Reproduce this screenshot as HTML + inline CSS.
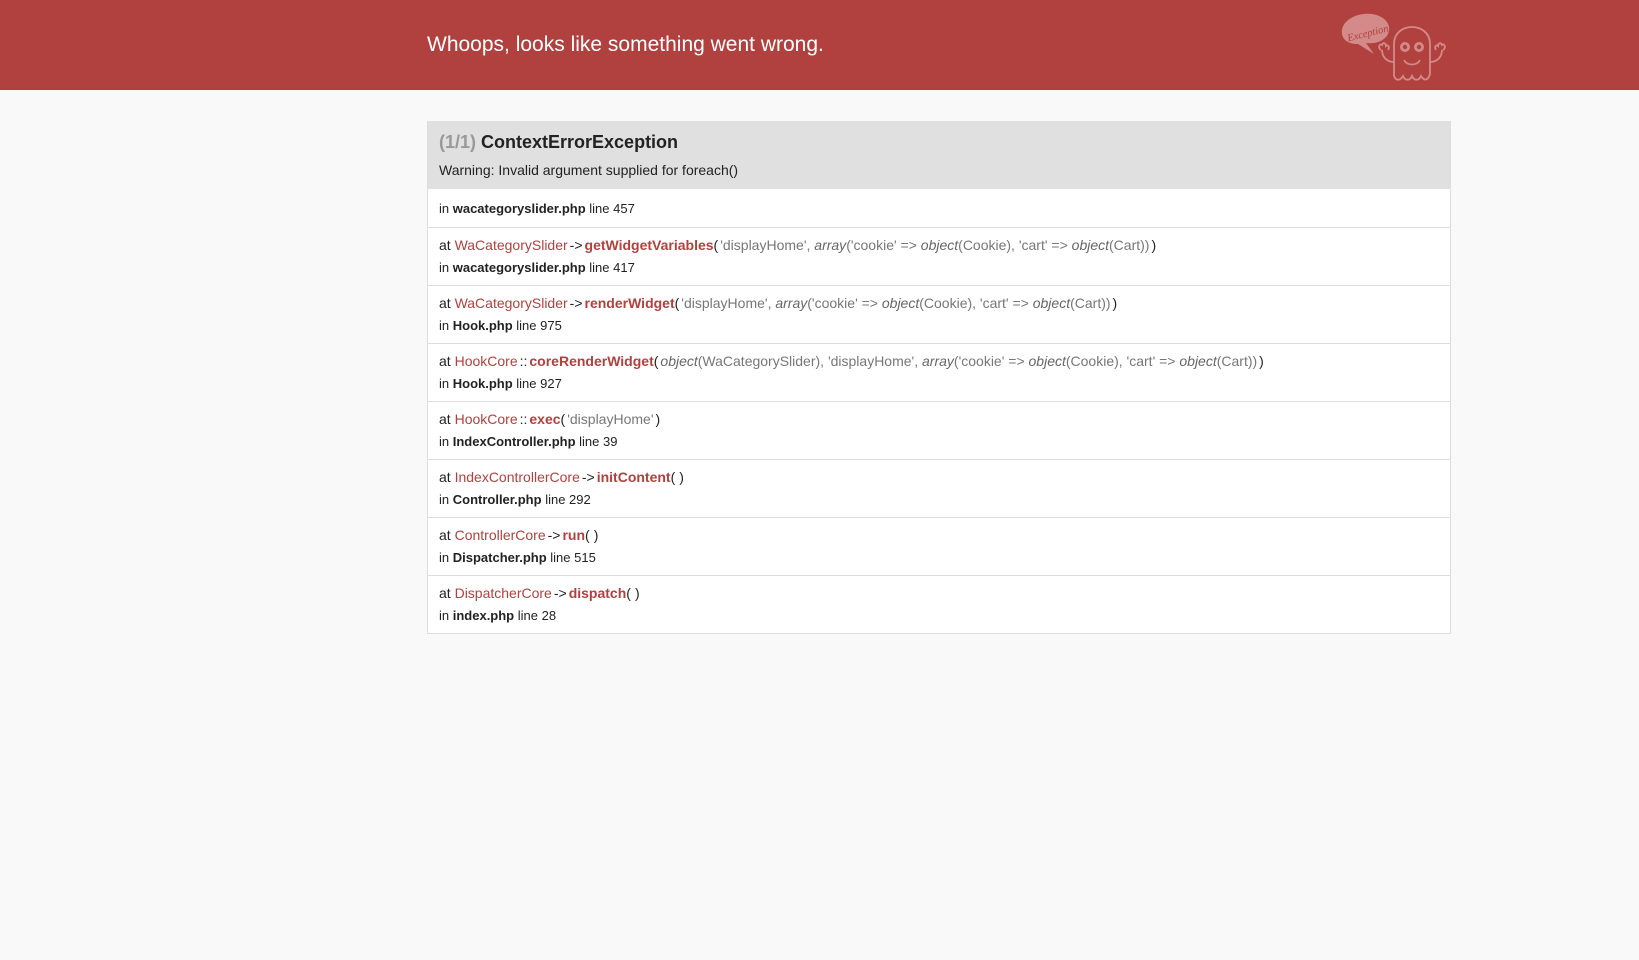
<!DOCTYPE html>
<html><head><meta charset="utf-8"><style>
*{margin:0;padding:0;box-sizing:border-box}
body{background:#f9f9f9;font-family:"Liberation Sans",Arial,sans-serif;color:#222;width:1639px;height:960px;overflow:hidden}
.hdr{background:#b0413e;height:90px;position:relative}
.hdr h1{position:absolute;left:427px;top:31px;font-size:21px;font-weight:normal;color:#fff;line-height:28px}
.box{position:absolute;left:427px;top:121px;width:1024px;border:1px solid #ddd;border-top:none;background:#fff}
.head{background:#e0e0e0;padding:9px 11px 8px}
.head h2{font-size:18px;line-height:24px;font-weight:bold;color:#222}
.head h2 span{color:#999}
.head p{font-size:14px;line-height:22px;margin-top:5px}
.row{border-top:1px solid #ddd;padding:6px 11px 8px;font-size:14px;line-height:22px;height:58px}
.row.f{padding:9px 11px 7px;height:38px;border-top:none;font-size:13px}
.in{font-size:13px}
.in b{color:#222}
.c{color:#b0413e}
.m{color:#b0413e;font-weight:bold}
.a{color:#777;margin:0 2px}
.a i{color:#666}
.s{margin:0 2px}
</style></head><body>
<div class="hdr"><h1>Whoops, looks like something went wrong.</h1>
<svg style="position:absolute;left:1338px;top:10px" width="116" height="72" viewBox="0 0 116 72">
<g fill="none" stroke="#d48a88" stroke-width="1.8">
<path d="M56 50 V34 C56 22 66 17 74 17 C82 17 92 22 92 34 V64 C90 71 86 71 83 66 C81 71 76 71 74 66 C72 71 67 71 65 66 C62 71 58 71 56 66 Z"/>
<path d="M56 52 C48 52 44 46 44 40 M43 40 C40 38 41 33 44 35 C45 32 48 33 48 36 C50 34 52 37 50 40"/>
<path d="M92 52 C100 52 104 46 104 40 M105 40 C108 38 107 33 104 35 C103 32 100 33 100 36 C98 34 96 37 98 40"/>
<path d="M66 50 C69 56 79 56 82 50"/>
</g>
<circle cx="67" cy="37" r="5" fill="#d48a88"/><circle cx="81" cy="37" r="5" fill="#d48a88"/>
<circle cx="67" cy="37" r="2.2" fill="#b0413e"/><circle cx="81" cy="37" r="2.2" fill="#b0413e"/>
<path d="M4 24 C2 10 20 2 34 4 C48 6 54 16 50 24 C46 32 36 34 28 33 L36 44 L20 34 C10 34 5 30 4 24Z" fill="#d48a88"/>
<text x="8" y="27" font-family="Liberation Serif,serif" font-style="italic" font-size="10.5" fill="#b0413e" transform="rotate(-14 27 20)">Exception!</text>
</svg>
</div>
<div class="box">
<div class="head"><h2><span>(1/1)</span> ContextErrorException</h2><p>Warning: Invalid argument supplied for foreach()</p></div>
<div class="row f">in <b>wacategoryslider.php</b> line 457</div>
<div class="row">at <span class="c">WaCategorySlider</span><span class="s">-&gt;</span><span class="m">getWidgetVariables</span>(<span class="a">'displayHome', <i>array</i>('cookie' =&gt; <i>object</i>(Cookie), 'cart' =&gt; <i>object</i>(Cart))</span>)<br><span class="in">in <b>wacategoryslider.php</b> line 417</span></div>
<div class="row">at <span class="c">WaCategorySlider</span><span class="s">-&gt;</span><span class="m">renderWidget</span>(<span class="a">'displayHome', <i>array</i>('cookie' =&gt; <i>object</i>(Cookie), 'cart' =&gt; <i>object</i>(Cart))</span>)<br><span class="in">in <b>Hook.php</b> line 975</span></div>
<div class="row">at <span class="c">HookCore</span><span class="s">::</span><span class="m">coreRenderWidget</span>(<span class="a"><i>object</i>(WaCategorySlider), 'displayHome', <i>array</i>('cookie' =&gt; <i>object</i>(Cookie), 'cart' =&gt; <i>object</i>(Cart))</span>)<br><span class="in">in <b>Hook.php</b> line 927</span></div>
<div class="row">at <span class="c">HookCore</span><span class="s">::</span><span class="m">exec</span>(<span class="a">'displayHome'</span>)<br><span class="in">in <b>IndexController.php</b> line 39</span></div>
<div class="row">at <span class="c">IndexControllerCore</span><span class="s">-&gt;</span><span class="m">initContent</span>(<span class="a"></span>)<br><span class="in">in <b>Controller.php</b> line 292</span></div>
<div class="row">at <span class="c">ControllerCore</span><span class="s">-&gt;</span><span class="m">run</span>(<span class="a"></span>)<br><span class="in">in <b>Dispatcher.php</b> line 515</span></div>
<div class="row">at <span class="c">DispatcherCore</span><span class="s">-&gt;</span><span class="m">dispatch</span>(<span class="a"></span>)<br><span class="in">in <b>index.php</b> line 28</span></div>
</div>
</body></html>
